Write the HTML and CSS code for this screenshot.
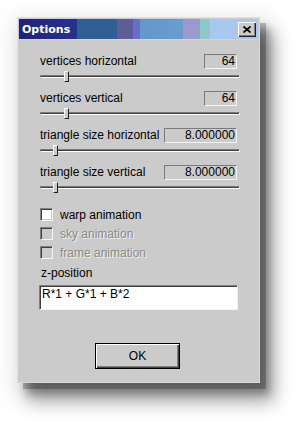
FILE: index.html
```html
<!DOCTYPE html>
<html>
<head>
<meta charset="utf-8">
<link rel="stylesheet" href="styles.css">
</head>
<body>
<div class="page">
<div class="dialog">
  <div class="titlebar">
    <span class="title">Options</span>
    <span class="close"><svg width="8" height="7" viewBox="0 0 8 7"><path d="M0.5 0.5 L7.5 6.5 M7.5 0.5 L0.5 6.5" stroke="#000" stroke-width="1.7" fill="none"/></svg></span>
  </div>
  <div class="content">
    <div class="group">
      <div class="row"><span class="label">vertices horizontal</span><span class="value short">64</span></div>
      <div class="slider"><div class="track"></div><div class="thumb" style="left:24px"></div></div>
    </div>
    <div class="group">
      <div class="row"><span class="label">vertices vertical</span><span class="value short">64</span></div>
      <div class="slider"><div class="track"></div><div class="thumb" style="left:24px"></div></div>
    </div>
    <div class="group">
      <div class="row"><span class="label">triangle size horizontal</span><span class="value long">8.000000</span></div>
      <div class="slider"><div class="track"></div><div class="thumb" style="left:13px"></div></div>
    </div>
    <div class="group">
      <div class="row"><span class="label">triangle size vertical</span><span class="value long">8.000000</span></div>
      <div class="slider"><div class="track"></div><div class="thumb" style="left:13px"></div></div>
    </div>
    <div class="checks">
      <div class="check"><span class="box"></span><span class="ctext">warp animation</span></div>
      <div class="check disabled"><span class="box"></span><span class="ctext">sky animation</span></div>
      <div class="check disabled"><span class="box"></span><span class="ctext">frame animation</span></div>
    </div>
    <div class="zlabel">z-position</div>
    <div class="input">R*1 + G*1 + B*2</div>
    <div class="actions"><span class="ok">OK</span></div>
  </div>
</div>
</div>
</body>
</html>
```
FILE: styles.css
```css
html, body {
  margin: 0;
  padding: 0;
  background: #ffffff;
}
body {
  font-family: "Liberation Sans", Arial, sans-serif;
  font-size: 12px;
  color: #000;
}
.page {
  height: 422px;
  padding: 17px 0 0 17px;
  box-sizing: border-box;
}
.dialog {
  width: 243px;
  height: 366px;
  box-sizing: border-box;
  background: #cbcbcb;
  border: 1px solid;
  border-color: #e2e2e2 #d8d8d8 #d8d8d8 #e2e2e2;
  padding: 1px;
  display: flex;
  flex-direction: column;
  box-shadow:
    6px 6px 0 rgba(0,0,0,0.22),
    9px 11px 8px rgba(0,0,0,0.30),
    13px 18px 16px 2px rgba(0,0,0,0.26),
    4px 8px 22px 6px rgba(0,0,0,0.12);
}
.titlebar {
  height: 20px;
  display: flex;
  align-items: center;
  justify-content: space-between;
  padding: 0 2px 0 3px;
  background: linear-gradient(to right,
    #1f2378 0, #252c88 38px, #28308e 58px,
    #2f5f95 58px, #2f5f95 98px,
    #5d5d97 98px, #5d5d97 114px,
    #6b6bca 114px, #6b6bca 121px,
    #6298cb 121px, #6a9ccf 164px,
    #9a9ad0 164px, #9a9ad0 181px,
    #8ec8c8 181px, #8ec8c8 191px,
    #a8c8f0 191px, #a8c8f0 239px);
  border-bottom: 1px solid #e4d0c0;
}
.title {
  font-family: "DejaVu Sans", Verdana, sans-serif;
  font-weight: bold;
  font-size: 11px;
  color: #ffffff;
}
.close {
  width: 18px;
  height: 15px;
  box-sizing: border-box;
  background: #cbcbcb;
  display: flex;
  align-items: center;
  justify-content: center;
  box-shadow: inset 1px 1px #ffffff, inset -1px -1px #202020, inset -2px -2px #808080;
}
.content {
  flex: 1;
  display: flex;
  flex-direction: column;
  padding: 14px 21px 12px 21px;
}
.group {
  height: 37px;
  display: flex;
  flex-direction: column;
}
.row {
  height: 15px;
  line-height: 15px;
  display: flex;
  justify-content: space-between;
  align-items: center;
}
.label {
  white-space: nowrap;
}
.value {
  height: 15px;
  box-sizing: border-box;
  border: 1px solid;
  border-color: #7a7a7a #f4f4f4 #f4f4f4 #7a7a7a;
  text-align: right;
  line-height: 13px;
  padding-right: 1px;
}
.value.short { width: 33px; }
.value.long { width: 73px; }
.slider {
  position: relative;
  height: 22px;
  margin-right: -3px;
}
.track {
  position: absolute;
  left: 0;
  right: 0;
  top: 6px;
  height: 3px;
  box-sizing: border-box;
  border-top: 1px solid #7a7a7a;
  border-left: 1px solid #7a7a7a;
  border-bottom: 1px solid #ffffff;
  border-right: 1px solid #ffffff;
  background: #404040;
}
.thumb {
  position: absolute;
  top: 2px;
  width: 5px;
  height: 11px;
  box-sizing: border-box;
  background: #cbcbcb;
  border-left: 1px solid #ffffff;
  border-top: 1px solid #ffffff;
  border-right: 1px solid #202020;
  border-bottom: 1px solid #202020;
}
.checks {
  margin-top: 3px;
  display: flex;
  flex-direction: column;
}
.check {
  height: 19px;
  display: flex;
  align-items: center;
  gap: 7px;
}
.box {
  width: 13px;
  height: 13px;
  box-sizing: border-box;
  background: #ffffff;
  border: 1px solid;
  border-color: #808080 #f4f4f4 #f4f4f4 #808080;
  box-shadow: inset 1px 1px #404040, inset -1px -1px #cbcbcb;
}
.check.disabled .box {
  background: #cbcbcb;
}
.check.disabled .ctext {
  color: #8a8a8a;
  text-shadow: 1px 1px 0 #f2f2f2;
}
.zlabel {
  margin-top: 4px;
  height: 15px;
  line-height: 15px;
  padding-left: 1px;
}
.input {
  margin: 4px -1px 0 -1px;
  height: 25px;
  box-sizing: border-box;
  background: #ffffff;
  border: 1px solid;
  border-color: #808080 #f4f4f4 #f4f4f4 #808080;
  box-shadow: inset 1px 1px #404040;
  padding: 1px 0 0 2px;
  line-height: 15px;
}
.actions {
  margin-top: auto;
  display: flex;
  justify-content: center;
}
.ok {
  width: 85px;
  height: 26px;
  box-sizing: border-box;
  border: 1px solid #000;
  background: #cbcbcb;
  box-shadow: inset 1px 1px #ffffff, inset -1px -1px #404040, inset -2px -2px #808080;
  display: flex;
  align-items: center;
  justify-content: center;
  margin-left: -2px;
}
```
